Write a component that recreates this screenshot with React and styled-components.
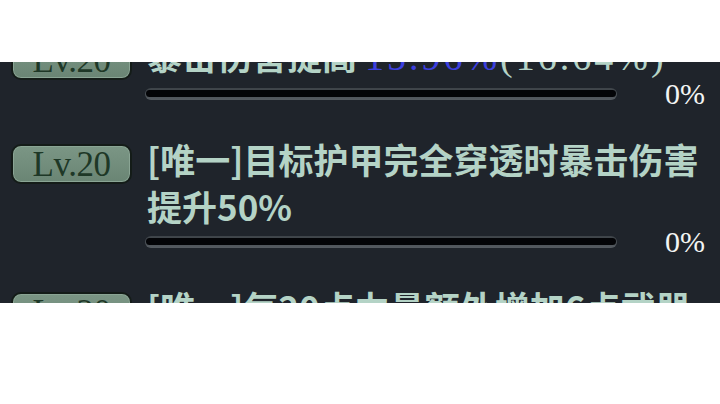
import React from 'react';
import styled, { createGlobalStyle } from 'styled-components';

const GlobalStyle = createGlobalStyle`
  html, body {
    margin: 0;
    padding: 0;
    background: #ffffff;
  }
`;

const Page = styled.div`
  width: 720px;
  height: 404px;
  background: #ffffff;
  padding-top: 62px;
  box-sizing: border-box;
`;

const Panel = styled.div`
  height: 241px;
  background: #1f242b;
  overflow: hidden;
`;

const List = styled.div`
  margin-top: -31px;
  display: flex;
  flex-direction: column;
  gap: 26px;
`;

const Row = styled.div`
  display: flex;
  align-items: flex-start;
  gap: 15px;
  padding: 0 15px 0 11px;
`;

const Badge = styled.div`
  flex: none;
  width: 121px;
  height: 40px;
  margin-top: 9px;
  box-sizing: border-box;
  border: 2px solid #141c18;
  border-radius: 10px;
  background: linear-gradient(#7b9685, #6a8574);
  box-shadow: inset 0 0 0 1px #8aa594;
  display: flex;
  align-items: center;
  justify-content: center;
  font-family: 'Liberation Serif', serif;
  font-size: 35px;
  line-height: 1;
  color: #1e3827;
  letter-spacing: -0.5px;
`;

const Body = styled.div`
  flex: 1;
  min-width: 0;
`;

const Desc = styled.div`
  font-family: 'Noto Sans CJK SC', 'Noto Sans', sans-serif;
  font-weight: 700;
  font-size: 35px;
  line-height: 47px;
  color: #b4d3c6;
`;

const Value = styled.span`
  color: ${({ $tone }) => ($tone === 'blue' ? '#3c3fe0' : '#b4d3c6')};
  font-family: 'Liberation Serif', 'Noto Sans CJK SC', serif;
  font-weight: 400;
  font-size: 38px;
  letter-spacing: 3px;
`;

const Progress = styled.div`
  display: flex;
  align-items: flex-start;
  gap: 48px;
  margin-top: 7px;
  margin-left: -2px;
`;

const Track = styled.div`
  flex: 1;
  height: 12px;
  box-sizing: border-box;
  border-radius: 6px;
  background: linear-gradient(#3d4348, #555b61);
  padding: 2px 1px 3px 1px;
`;

const Groove = styled.div`
  height: 100%;
  border-radius: 4px;
  background: #030407;
`;

const Percent = styled.div`
  flex: none;
  margin-top: -9px;
  font-family: 'Liberation Serif', serif;
  font-size: 30px;
  line-height: 30px;
  color: #f2f4f3;
`;

const skills = [
  {
    level: 20,
    text: (
      <>
        暴击伤害提高 <Value $tone="blue">15.96%</Value>
        <Value>(16.64%)</Value>
      </>
    ),
    pct: 0,
  },
  { level: 20, text: '[唯一]目标护甲完全穿透时暴击伤害提升50%', pct: 0 },
  { level: 20, text: '[唯一]每20点力量额外增加6点武器伤害', pct: 0 },
];

export default function App() {
  return (
    <Page>
      <GlobalStyle />
      <Panel>
        <List>
          {skills.map((s, i) => (
            <Row key={i}>
              <Badge>Lv.{s.level}</Badge>
              <Body>
                <Desc>{s.text}</Desc>
                <Progress>
                  <Track>
                    <Groove />
                  </Track>
                  <Percent>{s.pct}%</Percent>
                </Progress>
              </Body>
            </Row>
          ))}
        </List>
      </Panel>
    </Page>
  );
}
